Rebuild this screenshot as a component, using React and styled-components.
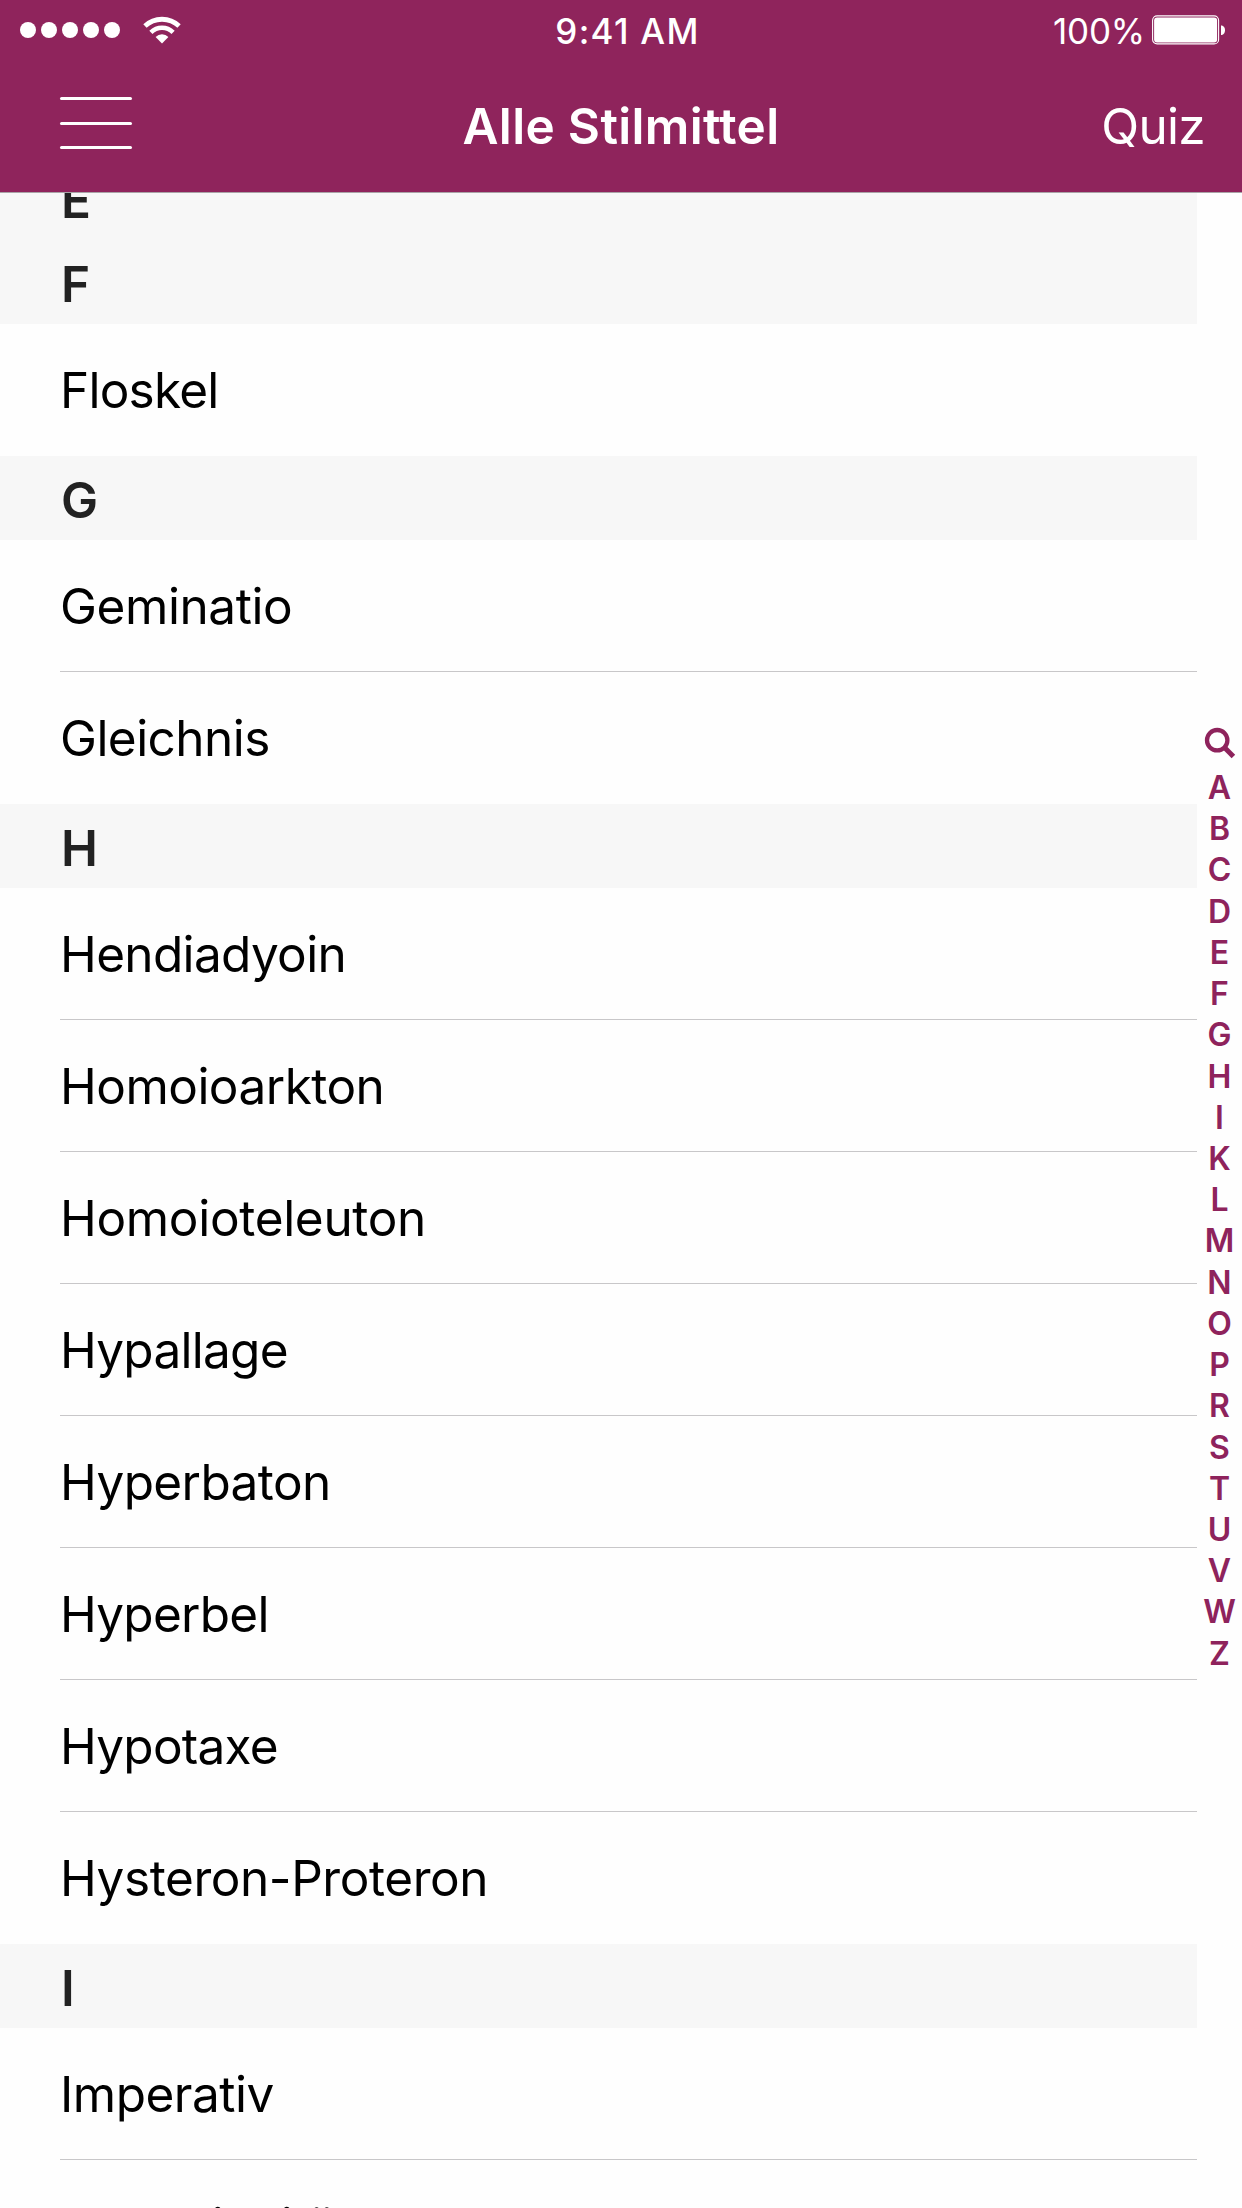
import React from 'react';
import styled, { createGlobalStyle } from 'styled-components';

const BRAND = '#8f245c';
const INDEX = '#8e235c';

const GlobalStyle = createGlobalStyle`
  * { box-sizing: border-box; }
  html, body { margin: 0; padding: 0; background: #fff; overflow: hidden; }
  body { font-family: Inter, "Liberation Sans", sans-serif; }
`;

const Screen = styled.div`
  width: 1242px;
  height: 2208px;
  display: flex;
  flex-direction: column;
  overflow: hidden;
  background: #fefefe;
`;

const Header = styled.header`
  flex: none;
  height: 193px;
  background: ${BRAND};
  border-bottom: 1px solid #a9a4a7;
  color: #fff;
`;

const StatusBar = styled.div`
  height: 60px;
  display: grid;
  grid-template-columns: 1fr auto 1fr;
  align-items: center;
  padding: 0 17px 0 20px;
`;

const Signal = styled.div`
  display: flex;
  align-items: center;
  gap: 5px;
`;

const SignalDot = styled.span`
  width: 16px;
  height: 16px;
  border-radius: 50%;
  background: #fff;
`;

const WifiIcon = styled.svg`
  display: block;
  width: 38px;
  height: 28px;
  margin-left: 18px;
`;

const Clock = styled.time`
  font-size: 35px;
  line-height: 42px;
  font-weight: 550;
  letter-spacing: 1.3px;
  padding: 2px 0 0 10px;
`;

const Power = styled.div`
  display: flex;
  justify-content: flex-end;
  align-items: center;
  gap: 7px;
`;

const Percent = styled.span`
  font-size: 35px;
  line-height: 42px;
  letter-spacing: -0.2px;
  padding-top: 2px;
`;

const BatteryIcon = styled.svg`
  display: block;
  width: 73px;
  height: 30px;
`;

const NavBar = styled.nav`
  height: 132px;
  display: grid;
  grid-template-columns: 1fr auto 1fr;
  align-items: center;
  padding: 0 37px 0 60px;
`;

const MenuButton = styled.button`
  width: 72px;
  height: 52px;
  margin-bottom: 6px;
  padding: 0;
  border: 0;
  background: none;
  display: flex;
  flex-direction: column;
  justify-content: space-between;
`;

const MenuLine = styled.span`
  height: 3px;
  border-radius: 1.5px;
  background: #fff;
`;

const Title = styled.h1`
  margin: 0 23px 0 0;
  font-size: 49.5px;
  line-height: 60px;
  font-weight: 600;
  letter-spacing: 0.34px;
`;

const QuizLink = styled.a`
  justify-self: end;
  font-size: 49.5px;
  line-height: 60px;
  letter-spacing: -0.7px;
`;

const Content = styled.main`
  flex: 1;
  min-height: 0;
  display: flex;
  overflow: hidden;
`;

const List = styled.div`
  width: 1197px;
  flex: none;
  margin-top: -37px;
`;

const SectionTitle = styled.h2`
  margin: 0;
  height: 84px;
  padding: 4px 0 0 61px;
  background: #f7f7f7;
  color: #222;
  font-size: 49.5px;
  line-height: 80px;
  font-weight: 600;
`;

const Row = styled.div`
  height: 132px;
  margin-left: 60px;
  border-bottom: 1px solid ${(p) => (p.$last ? 'transparent' : '#c8c7c9')};
  color: #000;
  font-size: 49.5px;
  line-height: 132px;
  letter-spacing: ${(p) => p.$tracking}px;
  white-space: nowrap;
`;

const IndexBar = styled.aside`
  flex: 1;
  display: flex;
  flex-direction: column;
  align-items: center;
  padding-top: 534px;
`;

const SearchIcon = styled.svg`
  display: block;
  flex: none;
  width: 32px;
  height: 32px;
  margin: 0 0 8px 1px;
`;

const IndexLetter = styled.span`
  flex: none;
  height: 41.23px;
  font-size: 32px;
  line-height: 41.23px;
  font-weight: 600;
  color: ${INDEX};
`;

const sections = [
  { letter: 'E', items: [] },
  { letter: 'F', items: [['Floskel', -0.78]] },
  { letter: 'G', items: [['Geminatio', -0.42], ['Gleichnis', -0.54]] },
  {
    letter: 'H',
    items: [
      ['Hendiadyoin', -0.66],
      ['Homoioarkton', -0.53],
      ['Homoioteleuton', -0.32],
      ['Hypallage', -0.74],
      ['Hyperbaton', -0.6],
      ['Hyperbel', -0.74],
      ['Hypotaxe', -0.76],
      ['Hysteron-Proteron', -0.43],
    ],
  },
  { letter: 'I', items: [['Imperativ', -0.5], ['Inkonzinnität', -0.5], ['Interjektion', -0.6]] },
];

const letters = 'ABCDEFGHIKLMNOPRSTUVWZ'.split('');

function Wifi() {
  return (
    <WifiIcon viewBox="0 0 38 28" fill="none" stroke="#fff">
      <path d="M1.95 10.1 A24.6 24.6 0 0 1 36.05 10.1" strokeWidth="4.8" />
      <path d="M7.9 16.4 A15.8 15.8 0 0 1 30.1 16.4" strokeWidth="4.5" />
      <path d="M19 27.4 L12.6 20.9 A9.2 9.2 0 0 1 25.4 20.9 Z" fill="#fff" stroke="none" />
    </WifiIcon>
  );
}

function Battery() {
  return (
    <BatteryIcon viewBox="0 0 73 30">
      <rect x="0.6" y="0.9" width="66" height="28" rx="4.5" fill="none" stroke="#fff" strokeWidth="1.1" />
      <rect x="2.1" y="2.4" width="63" height="25" rx="3" fill="#fff" />
      <path d="M69 10.5 h1 q3 1.2 3 4.7 t-3 4.7 h-1 z" fill="#fff" />
    </BatteryIcon>
  );
}

export default function App() {
  return (
    <>
      <GlobalStyle />
      <Screen>
        <Header>
          <StatusBar>
            <Signal>
              {[0, 1, 2, 3, 4].map((n) => (
                <SignalDot key={n} />
              ))}
              <Wifi />
            </Signal>
            <Clock>9:41 AM</Clock>
            <Power>
              <Percent>100%</Percent>
              <Battery />
            </Power>
          </StatusBar>
          <NavBar>
            <MenuButton aria-label="Menü">
              <MenuLine />
              <MenuLine />
              <MenuLine />
            </MenuButton>
            <Title>Alle Stilmittel</Title>
            <QuizLink>Quiz</QuizLink>
          </NavBar>
        </Header>
        <Content>
          <List>
            {sections.map(({ letter, items }) => (
              <section key={letter}>
                <SectionTitle>{letter}</SectionTitle>
                {items.map(([name, tracking], i) => (
                  <Row key={name} $tracking={tracking} $last={i === items.length - 1}>
                    {name}
                  </Row>
                ))}
              </section>
            ))}
          </List>
          <IndexBar>
            <SearchIcon viewBox="0 0 32 32" fill="none" stroke={INDEX}>
              <circle cx="13.2" cy="13.2" r="10.2" strokeWidth="4.3" />
              <path d="M20.5 20.5 L29.4 29.4" strokeWidth="5" />
            </SearchIcon>
            {letters.map((l) => (
              <IndexLetter key={l}>{l}</IndexLetter>
            ))}
          </IndexBar>
        </Content>
      </Screen>
    </>
  );
}
